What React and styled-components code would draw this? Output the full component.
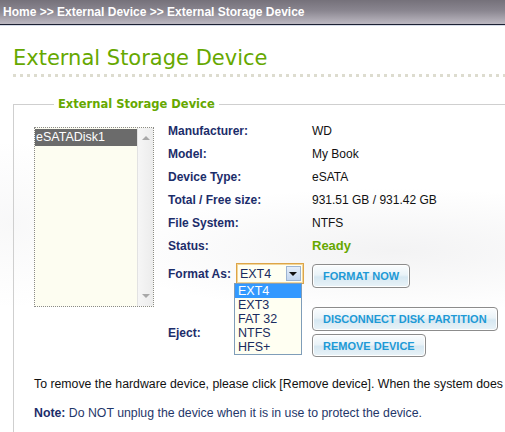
import React from "react";
import styled, { createGlobalStyle } from "styled-components";

const GlobalStyle = createGlobalStyle`
  html, body {
    margin: 0;
    padding: 0;
    overflow: hidden;
  }
  body {
    background: #fff;
    font-family: "Liberation Sans", Arial, sans-serif;
  }
`;

const Page = styled.div`
  width: 505px;
  height: 432px;
  overflow: hidden;
  background:
    radial-gradient(ellipse 420px 90px at 78% 58%, rgba(120, 120, 130, 0.09), transparent 70%),
    radial-gradient(ellipse 160px 120px at 2% 52%, rgba(120, 120, 130, 0.05), transparent 70%),
    #fff;
`;

const Crumbs = styled.div`
  height: 25px;
  box-sizing: border-box;
  padding: 0 0 1px 3px;
  display: flex;
  align-items: center;
  white-space: nowrap;
  color: #fff;
  font: bold 12px "Liberation Sans", Arial, sans-serif;
  background: linear-gradient(#75717a, #8a8690 45%, #bdb9c2);
  border-bottom: 1px solid #1c2133;
  box-shadow: 0 1px 0 #d6dce8;
`;

const Title = styled.h1`
  margin: 20px 0 0 13px;
  font: normal 21px/26px "DejaVu Sans", Verdana, sans-serif;
  color: #66a800;
  white-space: nowrap;
`;

const Dots = styled.div`
  margin: 3px 0 0 13px;
  height: 3px;
  background: repeating-linear-gradient(90deg, #dddccf 0 3px, transparent 3px 7px);
`;

const Box = styled.fieldset`
  margin: 20px 0 0 13px;
  padding: 0 0 40px 20px;
  width: 720px;
  border: 0;
  border-top: 1px solid #cfcfcf;
  border-left: 1px solid #cfcfcf;
`;

const Legend = styled.legend`
  margin-left: 20px;
  padding: 0 4px 0 4px;
  font: bold 11.5px/14px "DejaVu Sans", Verdana, sans-serif;
  color: #66a800;
`;

const Main = styled.div`
  display: flex;
  gap: 14px;
  padding-top: 8px;
`;

const ListBox = styled.div`
  margin-top: 8px;
  width: 118px;
  height: 178px;
  border: 1px dotted #8a8a8a;
  background: #fdfdf1;
  display: flex;
  flex-shrink: 0;
`;

const Items = styled.div`
  flex: 1;
  padding-top: 1px;
`;

const Item = styled.div`
  height: 17px;
  padding-left: 1px;
  font: 12.5px/17px "Liberation Sans", Arial, sans-serif;
  color: ${(p) => (p.$selected ? "#fff" : "#222")};
  background: ${(p) => (p.$selected ? "#6b6b6b" : "transparent")};
`;

const Scroll = styled.div`
  width: 16px;
  background: linear-gradient(90deg, #f6f6f6, #ececec);
  border-left: 1px solid #e2e2e2;
  display: flex;
  flex-direction: column;
  justify-content: space-between;
  align-items: center;
  padding: 8px 0 8px;
  box-sizing: border-box;
`;

const Arrow = styled.span`
  width: 0;
  height: 0;
  border-left: 4px solid transparent;
  border-right: 4px solid transparent;
  ${(p) =>
    p.$down
      ? "border-top: 4px solid #a8a8a8;"
      : "border-bottom: 4px solid #a8a8a8;"}
`;

const Info = styled.div`
  display: flex;
  flex-direction: column;
`;

const Row = styled.div`
  display: flex;
  align-items: center;
  height: 23px;
`;

const Label = styled.div`
  width: 144px;
  flex-shrink: 0;
  display: flex;
  align-items: center;
  gap: 5px;
  font: bold 12px "Liberation Sans", Arial, sans-serif;
  color: #1c2d6a;
  position: relative;
`;

const Value = styled.div`
  font: ${(p) => (p.$ready ? "bold 13px" : "12px")} "Liberation Sans", Arial, sans-serif;
  color: ${(p) => (p.$ready ? "#66a800" : "#111")};
`;

const FormatRow = styled.div`
  display: flex;
  align-items: flex-start;
  padding-top: 7px;
  height: 24px;
  & > ${Label} {
    margin-top: -1px;
    height: 21px;
  }
`;

const EjectRow = styled.div`
  display: flex;
  align-items: center;
  margin-top: 19px;
  & > ${Label} {
    padding-top: 1px;
  }
`;

const Stack = styled.div`
  display: flex;
  flex-direction: column;
  align-items: flex-start;
  gap: 3px;
`;

const Select = styled.div`
  width: 68px;
  height: 21px;
  box-sizing: border-box;
  border: 1px solid #dda548;
  box-shadow: inset 0 0 0 1px #f3d699;
  background: #fffff2;
  display: flex;
  align-items: center;
  justify-content: space-between;
  padding: 0 2px 0 3px;
  font: 12.5px "Liberation Sans", Arial, sans-serif;
  font-weight: normal;
  color: #1a2c5e;
`;

const Drop = styled.span`
  width: 15px;
  height: 15px;
  box-sizing: border-box;
  border: 1px solid #9db4d2;
  background: linear-gradient(#e4eefa, #c3d6ef);
  display: flex;
  align-items: center;
  justify-content: center;
  &::after {
    content: "";
    border-left: 4px solid transparent;
    border-right: 4px solid transparent;
    border-top: 4px solid #111;
    margin-top: 1px;
  }
`;

const Menu = styled.div`
  position: absolute;
  left: 66px;
  top: 20px;
  width: 68px;
  box-sizing: border-box;
  border: 1px solid #7f9db9;
  background: #fffff2;
  z-index: 2;
`;

const Option = styled.div`
  height: 14px;
  padding-left: 3px;
  font: 12.5px/14px "Liberation Sans", Arial, sans-serif;
  font-weight: normal;
  color: ${(p) => (p.$active ? "#fff" : "#1a2c5e")};
  background: ${(p) => (p.$active ? "#3399ff" : "transparent")};
`;

const Button = styled.button`
  height: ${(p) => p.$h || 24}px;
  padding: 0 10px;
  border: 1px solid #8c8c8c;
  border-radius: 4px;
  background: linear-gradient(#fbfdfe, #eaf3f8 45%, #d7e8f2 55%, #e9f3f8);
  box-shadow: inset 0 0 0 1px #fff;
  font: bold 11px "Liberation Sans", Arial, sans-serif;
  color: #1e9ad6;
  white-space: nowrap;
  cursor: pointer;
`;

const Text = styled.p`
  margin: ${(p) => p.$top}px 0 0;
  font: 12.3px/16px "Liberation Sans", Arial, sans-serif;
  color: ${(p) => (p.$note ? "#1f376a" : "#111")};
  white-space: nowrap;
  & b {
    color: #1c2d6a;
  }
`;

const details = [
  ["Manufacturer:", "WD"],
  ["Model:", "My Book"],
  ["Device Type:", "eSATA"],
  ["Total / Free size:", "931.51 GB / 931.42 GB"],
  ["File System:", "NTFS"],
];

const formats = ["EXT4", "EXT3", "FAT 32", "NTFS", "HFS+"];

export default function App() {
  return (
    <Page>
      <GlobalStyle />
      <Crumbs>Home &gt;&gt; External Device &gt;&gt; External Storage Device</Crumbs>
      <Title>External Storage Device</Title>
      <Dots />
      <Box>
        <Legend>External Storage Device</Legend>
        <Main>
          <ListBox>
            <Items>
              <Item $selected>eSATADisk1</Item>
            </Items>
            <Scroll>
              <Arrow />
              <Arrow $down />
            </Scroll>
          </ListBox>
          <Info>
            {details.map(([k, v]) => (
              <Row key={k}>
                <Label>{k}</Label>
                <Value>{v}</Value>
              </Row>
            ))}
            <Row>
              <Label>Status:</Label>
              <Value $ready>Ready</Value>
            </Row>
            <FormatRow>
              <Label>
                Format As:
                <Select>
                  EXT4
                  <Drop />
                </Select>
                <Menu>
                  {formats.map((f, i) => (
                    <Option key={f} $active={i === 0}>
                      {f}
                    </Option>
                  ))}
                </Menu>
              </Label>
              <Button>FORMAT NOW</Button>
            </FormatRow>
            <EjectRow>
              <Label>Eject:</Label>
              <Stack>
                <Button>DISCONNECT DISK PARTITION</Button>
                <Button $h={23}>REMOVE DEVICE</Button>
              </Stack>
            </EjectRow>
          </Info>
        </Main>
        <Text $top={19}>
          To remove the hardware device, please click [Remove device]. When the system does
        </Text>
        <Text $top={13} $note>
          <b>Note:</b> Do NOT unplug the device when it is in use to protect the device.
        </Text>
      </Box>
    </Page>
  );
}
